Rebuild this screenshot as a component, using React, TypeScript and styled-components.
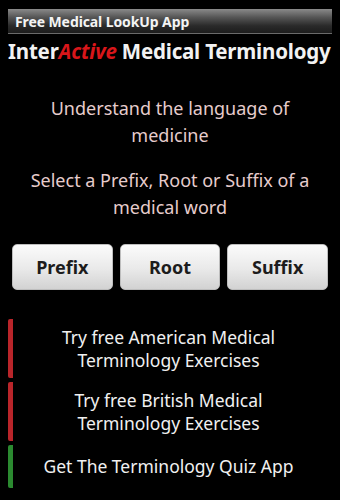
import React from "react";
import styled, { createGlobalStyle } from "styled-components";

const GlobalStyle = createGlobalStyle`
  html, body {
    margin: 0;
    padding: 0;
    background: #000;
  }
  body {
    font-family: "Noto Sans", "DejaVu Sans", sans-serif;
  }
`;

const Screen = styled.div`
  width: 340px;
  height: 500px;
  background: #000;
  overflow: hidden;
  padding: 9px 8px 0;
  box-sizing: border-box;
`;

const TitleBar = styled.div`
  height: 24px;
  display: flex;
  align-items: center;
  padding-left: 7px;
  background: linear-gradient(#8a8a8a 0%, #555 35%, #2a2a2a 70%, #1c1c1c 100%);
  border-bottom: 1px solid #6a6a6a;
  color: #f4f4f4;
  font-weight: 700;
  font-size: 14px;
  letter-spacing: -0.1px;
`;

const Heading = styled.h1`
  margin: 4px 0 0;
  font-size: 20.5px;
  line-height: 26px;
  font-weight: 700;
  color: #f2f2f2;
  white-space: nowrap;
  letter-spacing: -0.2px;
`;

const Accent = styled.span`
  color: #d8161a;
  font-style: italic;
`;

const Blurb = styled.p<{ $top: number }>`
  margin: ${(p) => p.$top}px 0 0;
  text-align: center;
  color: #e6cccc;
  font-size: 18px;
  line-height: 27px;
  padding: 0 14px;
`;

const ButtonRow = styled.div`
  display: grid;
  grid-template-columns: repeat(3, 1fr);
  gap: 7px;
  margin: 23px 4px 0;
`;

const WordButton = styled.button`
  height: 46px;
  border-radius: 5px;
  border: 1px solid #bdbdbd;
  background: linear-gradient(#fbfbfb 0%, #e9e9e9 55%, #d2d2d2 100%);
  color: #1c1c1c;
  font-family: "Noto Sans", "DejaVu Sans", sans-serif;
  font-weight: 700;
  font-size: 18px;
  padding: 0;
`;

const LinkList = styled.div`
  margin-top: 29px;
  display: flex;
  flex-direction: column;
  gap: 4px;
`;

const LinkRow = styled.div<{ $color: string; $height: number }>`
  display: flex;
  align-items: center;
  height: ${(p) => p.$height}px;
  border-left: 5px solid ${(p) => p.$color};
  border-radius: 2px;
`;

const LinkText = styled.div`
  flex: 1;
  text-align: center;
  color: #f0f0f0;
  font-size: 17.5px;
  line-height: 23px;
  padding-right: 8px;
`;

export default function App() {
  return (
    <>
      <GlobalStyle />
      <Screen>
        <TitleBar>Free Medical LookUp App</TitleBar>
        <Heading>
          Inter<Accent>Active</Accent> Medical Terminology
        </Heading>
        <Blurb $top={31}>Understand the language of medicine</Blurb>
        <Blurb $top={18}>Select a Prefix, Root or Suffix of a medical word</Blurb>
        <ButtonRow>
          <WordButton>Prefix</WordButton>
          <WordButton>Root</WordButton>
          <WordButton>Suffix</WordButton>
        </ButtonRow>
        <LinkList>
          <LinkRow $color="#b9252a" $height={59}>
            <LinkText>
              Try free American Medical
              <br />
              Terminology Exercises
            </LinkText>
          </LinkRow>
          <LinkRow $color="#b9252a" $height={59}>
            <LinkText>
              Try free British Medical
              <br />
              Terminology Exercises
            </LinkText>
          </LinkRow>
          <LinkRow $color="#2b8a30" $height={43}>
            <LinkText>Get The Terminology Quiz App</LinkText>
          </LinkRow>
        </LinkList>
      </Screen>
    </>
  );
}
